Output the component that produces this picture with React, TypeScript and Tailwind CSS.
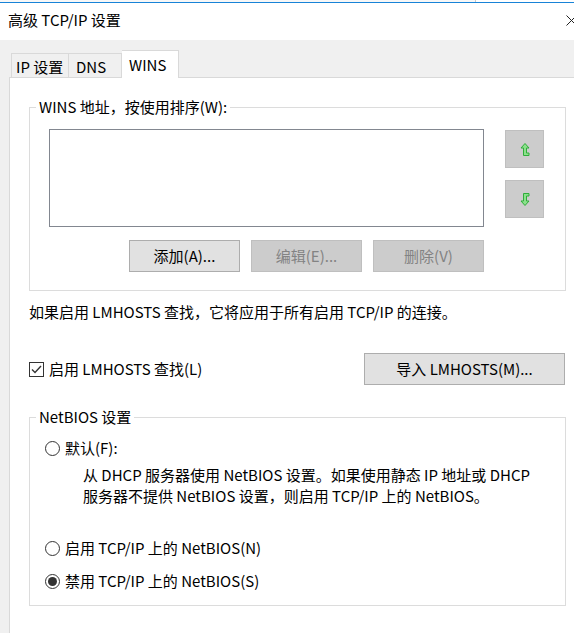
import React from 'react';

const font = { fontFamily: '"Noto Sans CJK SC", "Noto Sans", sans-serif' };

function Radio({ checked, label }: { checked?: boolean; label: string }) {
  return (
    <div className="flex items-center h-5">
      <span className="w-[15px] h-[15px] rounded-full border border-[#333] bg-white flex items-center justify-center">
        {checked && <span className="w-[9px] h-[9px] rounded-full bg-[#333]" />}
      </span>
      <span className="ml-[5px]">{label}</span>
    </div>
  );
}

function Btn({ label, disabled, w = 'w-[111px]' }: { label: string; disabled?: boolean; w?: string }) {
  return (
    <div
      className={`${w} h-8 flex items-center justify-center border ${
        disabled ? 'bg-[#cccccc] border-[#bfbfbf] text-[#838383]' : 'bg-[#e1e1e1] border-[#adadad] text-black'
      }`}
    >
      {label}
    </div>
  );
}

function MoveArrow({ down }: { down?: boolean }) {
  return (
    <svg width="10" height="13" viewBox="0 0 10 13" className={down ? 'rotate-180' : ''}>
      <path
        d="M5 0.5 L9 5 L6.5 5 L6.5 10 L9 10 L9 12.5 L3.5 12.5 L3.5 5 L1 5 Z"
        fill="#8be08b"
        stroke="#2fae3a"
        strokeWidth="1"
        transform={down ? 'scale(-1,1) translate(-10,0)' : undefined}
      />
    </svg>
  );
}

export default function App() {
  return (
    <div className="w-[574px] h-[633px] overflow-hidden bg-[#f0f0f0] text-[15px] text-black leading-5" style={font}>
      {/* title bar */}
      <div className="h-10 bg-white flex flex-col">
        <div className="flex h-[2px]">
          <div className="w-[476px] border-r border-[#c8c8c8] bg-[#f7f7f7]" />
        </div>
        <div className="h-px bg-[#1883d7]" />
        <div className="flex-1 flex items-center justify-between pl-2 pb-[3px]">
          <span>高级 TCP/IP 设置</span>
          <svg width="11" height="11" viewBox="0 0 11 11" className="mr-[-3px]">
            <path d="M0.5 0.5 L10.5 10.5 M10.5 0.5 L0.5 10.5" stroke="#222" strokeWidth="1" />
          </svg>
        </div>
      </div>

      {/* tabs */}
      <div className="pl-[9px] pt-[10px]">
        <div className="flex items-end pl-[2px] h-[27px] relative z-10">
          <div className="w-[58px] h-[25px] mb-[-1px] border border-b-0 border-[#d9d9d9] pl-[4px] flex items-center pt-[1px]">
            IP 设置
          </div>
          <div className="w-[53px] h-[25px] mb-[-1px] border border-l-0 border-b-0 border-[#d9d9d9] pl-[7px] flex items-center pt-[1px]">
            DNS
          </div>
          <div className="w-[57px] h-[28px] mb-[-1px] border border-l-0 border-b-0 border-[#d9d9d9] bg-white pl-[7px] flex items-center">
            WINS
          </div>
        </div>

        {/* panel */}
        <div className="bg-white border-l border-t border-[#d9d9d9] h-[600px] pl-[19px]">
          <div className="w-[537px]">
            <fieldset className="border border-[#dcdcdc] mt-[19px] h-[194px] px-0">
              <legend className="ml-[6px] px-[3px] leading-5">WINS 地址，按使用排序(W):</legend>
              <div className="flex pl-[19px] mt-[12px]">
                <div className="w-[435px] h-[98px] border border-[#828790] bg-white" />
                <div className="ml-[21px] mt-px flex flex-col gap-[12px]">
                  <div className="w-[39px] h-[38px] bg-[#cccccc] border border-[#bfbfbf] flex items-center justify-center">
                    <MoveArrow />
                  </div>
                  <div className="w-[39px] h-[38px] bg-[#cccccc] border border-[#bfbfbf] flex items-center justify-center">
                    <MoveArrow down />
                  </div>
                </div>
              </div>
              <div className="flex gap-[11px] ml-[99px] mt-[13px]">
                <Btn label="添加(A)..." />
                <Btn label="编辑(E)..." disabled />
                <Btn label="删除(V)" disabled />
              </div>
            </fieldset>

            <div className="mt-[11px]">如果启用 LMHOSTS 查找，它将应用于所有启用 TCP/IP 的连接。</div>

            <div className="flex items-center justify-between mt-[31px]">
              <div className="flex items-center">
                <span className="w-[15px] h-[15px] border border-[#333] bg-white flex items-center justify-center">
                  <svg width="11" height="9" viewBox="0 0 11 9">
                    <path d="M1 4.5 L4 7.5 L10 1" fill="none" stroke="#333" strokeWidth="1.4" />
                  </svg>
                </span>
                <span className="ml-[5px]">启用 LMHOSTS 查找(L)</span>
              </div>
              <Btn label="导入 LMHOSTS(M)..." w="w-[201px] mr-px" />
            </div>

            <fieldset className="border border-[#dcdcdc] mt-[22px] h-[199px] px-0">
              <legend className="ml-[6px] px-[3px] leading-5">NetBIOS 设置</legend>
              <div className="pl-[15px] mt-[11px]">
                <Radio label="默认(F):" />
                <div className="pl-[38px] mt-[6px] leading-[21px] whitespace-nowrap">
                  从 DHCP 服务器使用 NetBIOS 设置。如果使用静态 IP 地址或 DHCP
                  <br />
                  服务器不提供 NetBIOS 设置，则启用 TCP/IP 上的 NetBIOS。
                </div>
                <div className="mt-[32px]">
                  <Radio label="启用 TCP/IP 上的 NetBIOS(N)" />
                </div>
                <div className="mt-[13px]">
                  <Radio checked label="禁用 TCP/IP 上的 NetBIOS(S)" />
                </div>
              </div>
            </fieldset>
          </div>
        </div>
      </div>
    </div>
  );
}
